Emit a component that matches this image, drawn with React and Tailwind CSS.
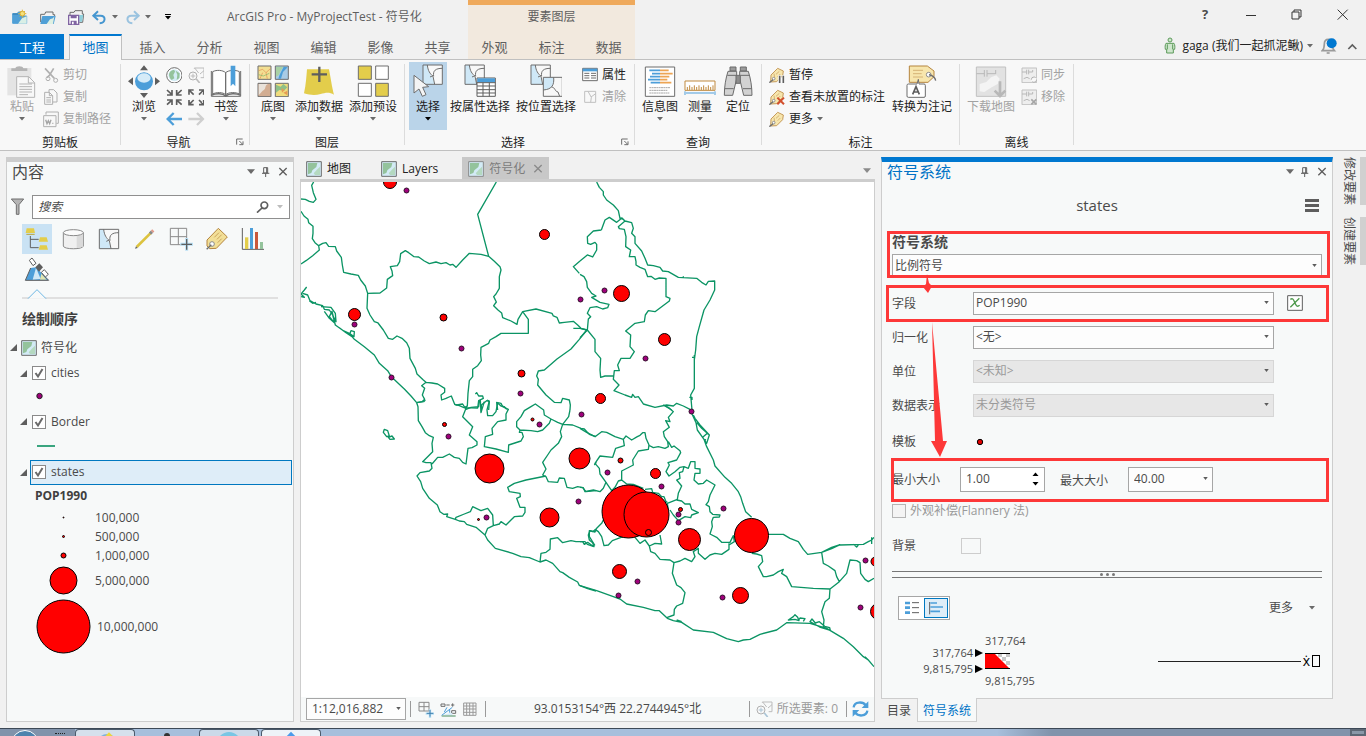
import clsx from 'clsx'

// Icons are drawn on a grid three times finer than the screen.
function Icon({ box, className, children }) {
  const [, , w, h] = box.split(' ').map(Number)
  return (
    <svg
      viewBox={box}
      width={w / 3}
      height={h / 3}
      fill="none"
      strokeWidth="3"
      aria-hidden="true"
      className={clsx('shrink-0', className)}
    >
      {children}
    </svg>
  )
}

function Caret({ className }) {
  return (
    <svg viewBox="0 0 6 4" className={clsx('h-1 w-1.5 shrink-0 fill-[#6a6a6a]', className)} aria-hidden="true">
      <path d="M0 0h6L3 3.5z" />
    </svg>
  )
}

/* ---------- icons ---------- */

const FolderIcon = () => (
  <Icon box="117 27 54 51">
    <path d="M122 66V43h12l3-7h22v8h5v4" stroke="#6d6d6d" />
    <path d="M127 48h40l-6 24h-40z" fill="#4f9fd6" />
    <path d="M140 72l10-14 9-3 4-6-4 23z" fill="#dff0e2" />
  </Icon>
)

const NewProjectIcon = () => (
  <Icon box="33 27 54 51">
    <path d="M38 70V41h14l3-5h12v12h13v22z" fill="#4f9fd6" stroke="#4f9fd6" />
    <path d="M38 42h16" stroke="#2f79ad" />
    <path d="M54 71l12-16 14-6v22z" fill="#d9efe6" />
    <circle cx="67" cy="41" r="7" fill="#f5e27a" stroke="#dcae30" />
    <path d="M67 29v4M67 49v4M55 41h4M75 41h4M59 33l3 3M72 46l3 3M75 33l-3 3M62 46l-3 3" stroke="#e0b63a" />
  </Icon>
)

const SaveIcon = () => (
  <Icon box="201 27 54 54">
    <path d="M210 48V40h12l3-5h22v10h4l-3 25h-10" stroke="#6d6d6d" />
    <path d="M238 48h12l-4 20h-8z" fill="#8fd0dc" />
    <path d="M206 49h30v27h-30z" fill="#fff" stroke="#8064a2" strokeWidth="4" />
    <path d="M212 49h18v9h-18zM212 65h18v11h-18z" fill="#8064a2" />
    <path d="M216 68h5v8h-5z" fill="#fff" />
  </Icon>
)

const UndoIcon = ({ flip }) => (
  <Icon box="276 30 51 48" className={flip && '-scale-x-100 opacity-50'}>
    <path d="M283 50h22c16 0 16 21-3 23" stroke="#4596d0" strokeWidth="6" />
    <path d="M297 37l-14 13 14 13" stroke="#4596d0" strokeWidth="6" />
  </Icon>
)

const PasteIcon = () => (
  <Icon box="20 193 96 99">
    <path d="M24 202h72v82H24z" fill="#e4e4e4" />
    <path d="M36 211h48v-8H72c0-8-24-8-24 0H36z" fill="#b4b4b4" />
    <path d="M52 228h36l18 18v44H52z" fill="#f8f8f8" stroke="#b4b4b4" />
    <path d="M87 228v19h19M60 250h38M60 258h38M60 266h38M60 274h38M60 282h26" stroke="#b4b4b4" />
  </Icon>
)

const CutIcon = () => (
  <Icon box="132 198 48 48">
    <path d="M138 202l28 30M164 202l-12 20-8 8" stroke="#b0b0b0" strokeWidth="5" />
    <circle cx="147" cy="233" r="6" stroke="#b0b0b0" />
    <circle cx="170" cy="238" r="6" stroke="#b0b0b0" />
  </Icon>
)

const CopyIcon = () => (
  <Icon box="132 264 48 48">
    <path d="M150 266h14l10 10v27h-24z" stroke="#b0b0b0" />
    <path d="M137 274h14l10 10v26h-24z" fill="#f8f8f8" stroke="#b0b0b0" />
    <path d="M151 274v10h10M142 290h14M142 297h14M142 303h14" stroke="#b0b0b0" />
  </Icon>
)

const CopyPathIcon = () => (
  <Icon box="132 332 48 51">
    <path d="M141 343v-8h37v34h-6" stroke="#b0b0b0" />
    <path d="M134 346h37v33h-37z" stroke="#b0b0b0" />
    <path d="M140 358l4 12 4-9 4 9 4-12M160 369h3" stroke="#a4a4a4" strokeWidth="4" />
  </Icon>
)

const ExploreIcon = () => (
  <Icon box="384 193 96 99">
    <circle cx="432" cy="242" r="27" fill="#4c9ed9" />
    <ellipse cx="432" cy="232" rx="20" ry="14" fill="#d5ebf8" />
    <path d="M432 194l12 15h-24zM432 292l12-15h-24zM384 242l15-12v24zM480 242l-15-12v24z" fill="#5e5e5e" />
  </Icon>
)

const GlobeIcon = () => (
  <Icon box="497 197 50 50">
    <circle cx="522" cy="222" r="23" fill="#fff" stroke="#6d6d6d" />
    <circle cx="522" cy="222" r="18" fill="#d3ecf5" />
    <path d="M507 215c8-12 17-10 17-4l-5 10 3 10-8 5c-8-7-9-15-7-21zM526 208l12 8-1 14-8 6 2-16z" fill="#94c39c" />
  </Icon>
)

const ZoomSelIcon = ({ tint = '#bcbcbc' }) => (
  <Icon box="563 197 50 50">
    <path d="M582 202v-2h29v29h-10M583 200l12 15M611 208l-12 10" stroke="#bcbcbc" />
    <circle cx="578" cy="224" r="12" fill="#f8f8f8" stroke="#b0b0b0" />
    <path d="M578 217v14M571 224h14" stroke={tint} />
    <path d="M588 233l10 12" stroke={tint} strokeWidth="5" />
  </Icon>
)

const ZoomInIcon = () => (
  <Icon box="497 263 50 50">
    <path
      d="M500 266l14 13M515 266v15h-15M544 266l-14 13M529 266v15h15M500 310l14-13M515 311v-15h-15M544 310l-14-13M529 311v-15h15"
      stroke="#5e5e5e"
      strokeWidth="5"
    />
  </Icon>
)

const ZoomOutIcon = () => (
  <Icon box="563 263 50 50">
    <path
      d="M566 266l14 14M566 280v-14h14M610 266l-14 14M610 280v-14h-14M566 310l14-14M566 296v14h14M610 310l-14-14M610 296v14h-14"
      stroke="#5e5e5e"
      strokeWidth="5"
    />
  </Icon>
)

const BackIcon = ({ flip }) => (
  <Icon box="497 332 50 48" className={flip && '-scale-x-100'}>
    <path d="M502 356h44M520 338l-18 18 18 18" stroke={flip ? '#cfcfcf' : '#4c9ed9'} strokeWidth="7" />
  </Icon>
)

const BookmarkIcon = () => (
  <Icon box="632 193 96 99">
    <path d="M636 211v76h88v-76" stroke="#6d6d6d" />
    <path d="M640 280V213c12-6 30-5 39 3v66c-8-8-28-8-39-2zM679 216c9-8 30-9 41-3v67c-11-6-32-6-41 2z" fill="#fff" stroke="#6d6d6d" />
    <path d="M636 284c14-7 34-6 43 2 10-8 31-9 45-2" stroke="#6d6d6d" strokeWidth="5" />
    <path d="M694 195h14v62l-7-8-7 8z" fill="#4c9ed9" />
  </Icon>
)

const BasemapIcon = () => (
  <Icon box="769 193 98 98">
    <path d="M772 196h39v40h-39z" fill="#f3df92" stroke="#6d6d6d" />
    <path d="M774 210l12-4 10 10 13-12M778 234l8-18M796 216l4 18" stroke="#e08d52" strokeWidth="2" />
    <path d="M774 222l14 4 18-8" stroke="#7db26b" strokeWidth="2" />
    <path d="M824 196h39v40h-39z" fill="#a8cbe6" stroke="#6d6d6d" />
    <path d="M826 198h22l-8 12-6 14-8 4z" fill="#a9d1a4" />
    <path d="M861 200l-14 14-6 20h-8l4-12 12-24z" fill="#4c9ed9" />
    <path d="M772 248h39v40h-39z" fill="#d2ad92" stroke="#6d6d6d" />
    <path d="M774 250h28c-12 5-4 16-16 20l-12 14z" fill="#e9e2da" />
    <path d="M824 248h39v40h-39z" fill="#f0dc7c" stroke="#6d6d6d" />
    <path d="M826 252l14 6 8-8 12 10-10 10-14-2-10 8z" fill="#8ec088" />
    <path d="M842 262l10 6-8 8zM848 276l12-6v14z" fill="#e79a54" />
  </Icon>
)

const AddDataIcon = () => (
  <Icon box="909 193 98 98">
    <path d="M921 206h66c4 20 9 55 15 76-14-9-26-6-40-2-18 5-32 3-50-2 6-25 7-50 9-72z" fill="#e3cd4b" />
    <path d="M958 198v46M935 221h46" stroke="#5e5e5e" strokeWidth="7" />
  </Icon>
)

const PresetIcon = () => (
  <Icon box="1068 193 98 98">
    <path d="M1072 196h39v40h-39zM1124 248h38v39h-38z" fill="#e3cd4b" stroke="#6d6d6d" />
    <path d="M1124 196h38v40h-38zM1072 248h39v39h-39z" fill="#fff" stroke="#6d6d6d" />
  </Icon>
)

// the split parcel that the selection tools share
const Parcel = ({ x, y }) => (
  <g transform={`translate(${x} ${y})`}>
    <path d="M0 0h58v58H0z" fill="#f8f8f8" />
    <path d="M0 0h13c2 18 6 25 14 34l8 24H0z" fill="#cfe8f7" />
    <path d="M0 0h58v58H0zM13 0c2 18 8 26 17 34l5 24M58 10c-20 0-29 7-26 24M30 32l-9 4" stroke="#6d6d6d" />
  </g>
)

const SelectIcon = () => (
  <Icon box="43 193 92 100">
    <Parcel x={73} y={196} />
    <path d="M46 227l44 34-18 2 10 22-11 5-10-22-15 12z" fill="#f4f4f4" stroke="#6d6d6d" />
  </Icon>
)

const SelectByAttrIcon = () => (
  <Icon box="190 193 98 100">
    <Parcel x={193} y={196} />
    <path d="M229 235h55v55h-55z" fill="#fff" stroke="#5e5e5e" />
    <path d="M230 236h53v12h-53z" fill="#4c9ed9" />
    <path d="M229 249h55M229 259h55M229 270h55M229 280h55M247 249v41M266 249v41" stroke="#5e5e5e" />
  </Icon>
)

const SelectByLocIcon = () => (
  <Icon box="388 193 98 100">
    <Parcel x={391} y={196} />
    <path d="M428 233h57v57h-57z" fill="#f8f8f8" />
    <path d="M428 233h31c2 22-4 36-31 38z" fill="#cfe8f7" />
    <path d="M428 233h57v57h-57zM459 233c2 22-4 36-31 38M452 262c14 2 8 12 20 15l5 13" stroke="#6d6d6d" />
  </Icon>
)

const AttributesIcon = () => (
  <Icon box="546 195 48 48">
    <path d="M548 199h44v37h-44z" fill="#fff" stroke="#6d6d6d" />
    <path d="M548 200h44v8h-44z" fill="#4c9ed9" />
    <path d="M553 214h15M553 221h15M553 228h15M573 214h15M573 221h15M573 228h15" stroke="#6d6d6d" />
  </Icon>
)

const ClearIcon = () => (
  <Icon box="546 265 48 48">
    <path d="M554 272h33v33h-33zM564 272l10 18-2 15M587 279l-14 10" stroke="#c0c0c0" />
  </Icon>
)

const InfographicIcon = () => (
  <Icon box="732 193 96 99">
    <path d="M736 199h88v88h-88z" fill="#fff" stroke="#6d6d6d" />
    <path d="M748 209h32M756 219h24M750 228h30M744 237h36M752 246h28" stroke="#4c9ed9" strokeWidth="5" />
    <path d="M780 209h26M780 219h38M780 228h28M780 237h22M780 246h34" stroke="#eda554" strokeWidth="5" />
    <path d="M748 261h62M748 269h54M748 277h60" stroke="#a8a8a8" strokeDasharray="6 1" />
  </Icon>
)

const MeasureIcon = () => (
  <Icon box="850 193 97 99">
    <path d="M853 241h90v28h-90z" fill="#fff" stroke="#c08a3e" />
    <path d="M860 268v-9M867 268v-14M874 268v-9M881 268v-14M888 268v-9M895 268v-14M902 268v-9M909 268v-14M916 268v-9M923 268v-14M930 268v-9M937 268v-14" stroke="#c08a3e" />
    <path d="M853 272v11M943 272v11M856 277h84" stroke="#4c9ed9" />
  </Icon>
)

const LocateIcon = () => (
  <Icon box="970 193 92 99">
    <path d="M991 199h18v12h-18zM1022 199h18v12h-18z" fill="#9b9b9b" stroke="#6a6a6a" />
    <path d="M985 212h26v22l-12 50h-25c0-26 4-50 11-72zM1020 212h26c7 22 11 46 11 72h-25l-12-50z" fill="#d2d2d2" stroke="#6a6a6a" />
    <path d="M983 224h26M1022 224h26M976 264h26M1030 264h26" stroke="#6a6a6a" />
    <path d="M1009 224h13v24h-13z" fill="#8d8d8d" stroke="#6a6a6a" />
  </Icon>
)

const TagIcon = ({ children }) => (
  <Icon box="57 196 48 50">
    <path d="M63 220l20-20 17 8-2 14-18 18-18 1z" fill="#f7e6ad" stroke="#c59a5a" />
    <path d="M78 218l10-9M83 225l8-8M74 228l-2-12" stroke="#c59a5a" strokeWidth="2" />
    <circle cx="71" cy="231" r="4" fill="#fff" stroke="#8d8d8d" />
    <path d="M58 243l11-9" stroke="#6d6d6d" strokeWidth="4" />
    {children}
  </Icon>
)

const ConvertIcon = () => (
  <Icon box="1 193 96 99">
    <path d="M11 196h54l20 15v17l-18 17H11z" fill="#f7e6ad" stroke="#b5853f" />
    <path d="M22 209h30M22 219h26M22 229h30" stroke="#c59a5a" strokeWidth="2" />
    <circle cx="69" cy="222" r="7" fill="#fff" stroke="#8d8d8d" />
    <path d="M70 222c8 2 18 4 20 18" stroke="#6d6d6d" strokeWidth="4" />
    <path d="M8 250h26l4-14 2 14h15q4 0 4 4v32q0 4-4 4H8q-4 0-4-4v-32q0-4 4-4z" fill="#fff" stroke="#6d6d6d" />
    <path d="M21 281l10-23 10 23M25 274h12" stroke="#5e5e5e" strokeWidth="5" />
  </Icon>
)

const DownloadMapIcon = () => (
  <Icon box="676 193 96 99">
    <path d="M680 199h88v88h-88z" fill="#e2e2e2" stroke="#c0c0c0" />
    <path d="M690 250l20-6 14-14 16-6 10 10-6 16-18 10-22 14-14-2z" fill="#f4f4f4" />
    <path d="M680 219h24M704 208v20M712 208v20M712 219h26M738 208v12" stroke="#b8b8b8" />
    <path d="M751 242v42M735 270l16 16 16-16" stroke="#b8b8b8" strokeWidth="8" />
  </Icon>
)

const OfflineIcon = ({ children }) => (
  <Icon box="812 197 50 50">
    <path d="M815 200h44v44h-44z" fill="#eeeeee" stroke="#c0c0c0" />
    <path d="M815 212h14M829 205v14M835 205v14M835 212h12v-6M820 232l10-4 8 4" stroke="#b8b8b8" />
    {children}
  </Icon>
)

const MapThumb = ({ light }) => (
  <Icon box="63 27 48 48">
    <path d="M65 29h44v44H65z" fill="#d3ebf6" stroke={light ? '#8a8a8a' : '#6d6d6d'} />
    <path d="M69 33h28l-3 12-12 10-3 8-10 4z" fill="#94c39c" />
    <path d="M97 52l8-8v25H90l-4-5z" fill="#b4d9c0" />
  </Icon>
)

const PinIcon = () => (
  <Icon box="785 44 28 32">
    <path d="M793 46h12v16h-12zM802 46v16M788 63h22M799 64v12" stroke="#5e5e5e" />
  </Icon>
)

const CrossIcon = ({ color = '#5e5e5e' }) => (
  <Icon box="834 47 30 28">
    <path d="M838 50l22 22M860 50l-22 22" stroke={color} strokeWidth="4" />
  </Icon>
)

/* ---------- title bar and ribbon tabs ---------- */

const TABS = ['插入', '分析', '视图', '编辑', '影像', '共享']

function RibbonTab({ children }) {
  return (
    <button type="button" className="h-full w-[57px] shrink-0 pt-0.5 text-center text-[13px] text-[#5f5f5f]">
      {children}
    </button>
  )
}

function Header() {
  return (
    <header className="flex border-b border-[#c0c0c0]">
      <div className="flex w-[468px] flex-col">
        <div className="flex h-[34px] items-center pl-[11px]">
          <button type="button" aria-label="新建工程"><NewProjectIcon /></button>
          <button type="button" aria-label="打开工程" className="ml-2.5"><FolderIcon /></button>
          <button type="button" aria-label="保存" className="ml-2.5"><SaveIcon /></button>
          <button type="button" aria-label="撤消" className="ml-1.5"><UndoIcon /></button>
          <Caret className="ml-1" />
          <button type="button" aria-label="恢复" className="ml-1.5"><UndoIcon flip /></button>
          <Caret className="ml-1" />
          <button type="button" aria-label="自定义快速访问工具栏" className="ml-3.5 flex flex-col gap-px">
            <span className="h-px w-1.5 bg-black" />
            <Caret className="fill-black" />
          </button>
          <h1 className="ml-14 whitespace-nowrap text-[#5f5f5f]">ArcGIS Pro - MyProjectTest - 符号化</h1>
        </div>
        <nav className="flex h-[25px]">
          <button type="button" className="w-16 bg-[#0078d0] pt-0.5 text-[13px] text-white">工程</button>
          <button
            type="button"
            className="relative ml-[5px] mr-0.5 h-[26px] w-[53px] border-x border-t-2 border-x-[#c0c0c0] border-t-[#0078d0] bg-[#f8f8f8] text-[13px] text-[#0073c6]"
          >
            地图
          </button>
          {TABS.map((tab) => (
            <RibbonTab key={tab}>{tab}</RibbonTab>
          ))}
        </nav>
      </div>
      <div className="flex w-[167px] flex-col border-t-[5px] border-[#efa95b] bg-[#f2e9de]">
        <p className="h-[29px] text-center leading-6 text-[#5f5f5f]">要素图层</p>
        <div className="flex h-[25px] justify-center">
          <RibbonTab>外观</RibbonTab>
          <RibbonTab>标注</RibbonTab>
          <RibbonTab>数据</RibbonTab>
        </div>
      </div>
      <div className="flex flex-1 flex-col items-end">
        <div className="flex h-[30px]">
          <button type="button" aria-label="帮助" className="w-[46px] text-[13px] font-bold text-[#4a4a4a]">?</button>
          <button type="button" aria-label="最小化" className="flex w-[46px] items-center justify-center">
            <span className="h-px w-2.5 bg-[#333]" />
          </button>
          <button type="button" aria-label="还原" className="flex w-[46px] items-center justify-center">
            <Icon box="754 29 34 34">
              <path d="M757 38h21v21h-21zM763 38v-6h21v21h-6" stroke="#333" />
            </Icon>
          </button>
          <button type="button" aria-label="关闭" className="flex w-[46px] items-center justify-center">
            <Icon box="892 29 34 34">
              <path d="M894 31l30 30M924 31l-30 30" stroke="#333" />
            </Icon>
          </button>
        </div>
        <div className="flex h-[29px] items-center pr-2 pt-0.5">
          <Icon box="369 112 36 51">
            <circle cx="387" cy="121" r="6" fill="#cfe6cd" stroke="#5c9a5a" />
            <path d="M375 131h24c3 4 3 12 2 18h-4v11h-20v-11h-4c-1-6-1-14 2-18z" fill="#cfe6cd" stroke="#5c9a5a" />
            <path d="M379 134v15M395 134v15" stroke="#5c9a5a" />
          </Icon>
          <button type="button" className="ml-1.5 flex items-center gap-1 text-[#222]">
            gaga (我们一起抓泥鳅)
            <Caret />
          </button>
          <button type="button" aria-label="通知" className="ml-2">
            <Icon box="843 109 54 54">
              <path d="M847 150c6-6 6-12 6-20s4-14 12-14 12 6 12 14 0 14 6 20z" stroke="#9a9a9a" strokeWidth="5" />
              <path d="M860 157h9" stroke="#9a9a9a" strokeWidth="5" />
              <circle cx="875" cy="128" r="15" fill="#0078d0" />
            </Icon>
          </button>
          <button type="button" aria-label="折叠功能区" className="ml-2">
            <Icon box="925 125 33 24">
              <path d="M929 146l12-12 12 12" stroke="#5e5e5e" strokeWidth="5" />
            </Icon>
          </button>
        </div>
      </div>
    </header>
  )
}

/* ---------- ribbon ---------- */

function Group({ title, width, launcher, children }) {
  return (
    <>
      <section className={clsx('flex flex-col pt-0.5', width)}>
        <div className="flex h-[68px] pl-1">{children}</div>
        <div className="mt-1 flex h-4 leading-[18px]">
          <h2 className="flex-1 text-center">{title}</h2>
          {launcher && (
            <button type="button" aria-label={`${title}选项`} className="w-[13px]">
              <Icon box="707 413 24 24">
                <path d="M709 433v-17h18" stroke="#6d6d6d" />
                <path d="M717 422l10 10M728 423v10h-11" stroke="#6d6d6d" />
              </Icon>
            </button>
          )}
        </div>
      </section>
      <div className="mt-1 h-[81px] w-px bg-[#dcdcdc]" />
    </>
  )
}

function BigButton({ icon, label, width = 'w-[38px]', menu, off, active }) {
  return (
    <button
      type="button"
      disabled={off}
      className={clsx('flex shrink-0 flex-col items-center whitespace-nowrap pt-[3px]', width, active && 'bg-[#bad4e9]', off && 'text-[#a2a2a2]')}
    >
      <span className="flex h-8 items-center">{icon}</span>
      <span className="leading-5">{label}</span>
      {menu && <Caret className={active && 'fill-black'} />}
    </button>
  )
}

function SmallButton({ icon, label, menu, off }) {
  return (
    <button
      type="button"
      disabled={off}
      className={clsx('flex h-[22px] items-center gap-1 whitespace-nowrap px-[3px]', off && 'text-[#a2a2a2]')}
    >
      <span className="flex w-4 justify-center">{icon}</span>
      {label}
      {menu && <Caret />}
    </button>
  )
}

function Ribbon() {
  return (
    <div className="flex border-b border-[#c0c0c0] bg-[#f8f8f8] text-[#222]">
      <Group title="剪贴板" width="w-[120px]">
        <BigButton icon={<PasteIcon />} label="粘贴" width="w-9" menu off />
        <div className="flex flex-col pt-0.5">
          <SmallButton icon={<CutIcon />} label="剪切" off />
          <SmallButton icon={<CopyIcon />} label="复制" off />
          <SmallButton icon={<CopyPathIcon />} label="复制路径" off />
        </div>
      </Group>
      <Group title="导航" width="w-32" launcher>
        <BigButton icon={<ExploreIcon />} label="浏览" menu />
        <div className="grid w-11 grid-cols-2 place-items-center pt-0.5">
          <button type="button" aria-label="全图"><GlobeIcon /></button>
          <button type="button" aria-label="缩放至所选" disabled><ZoomSelIcon /></button>
          <button type="button" aria-label="固定比例放大"><ZoomInIcon /></button>
          <button type="button" aria-label="固定比例缩小"><ZoomOutIcon /></button>
          <button type="button" aria-label="上一范围"><BackIcon /></button>
          <button type="button" aria-label="下一范围" disabled><BackIcon flip /></button>
        </div>
        <BigButton icon={<BookmarkIcon />} label="书签" menu />
      </Group>
      <Group title="图层" width="w-[154px]">
        <BigButton icon={<BasemapIcon />} label="底图" menu />
        <BigButton icon={<AddDataIcon />} label="添加数据" width="w-[54px]" menu />
        <BigButton icon={<PresetIcon />} label="添加预设" width="w-[54px]" menu />
      </Group>
      <Group title="选择" width="w-[229px]" launcher>
        <BigButton icon={<SelectIcon />} label="选择" menu active />
        <BigButton icon={<SelectByAttrIcon />} label="按属性选择" width="w-[66px]" />
        <BigButton icon={<SelectByLocIcon />} label="按位置选择" width="w-[66px]" />
        <div className="flex flex-col pt-0.5">
          <SmallButton icon={<AttributesIcon />} label="属性" />
          <SmallButton icon={<ClearIcon />} label="清除" off />
        </div>
      </Group>
      <Group title="查询" width="w-[126px]">
        <BigButton icon={<InfographicIcon />} label="信息图" width="w-[42px]" menu />
        <BigButton icon={<MeasureIcon />} label="测量" menu />
        <BigButton icon={<LocateIcon />} label="定位" />
      </Group>
      <Group title="标注" width="w-[197px]">
        <div className="flex w-[123px] flex-col items-start pt-0.5">
          <SmallButton
            label="暂停"
            icon={
              <TagIcon>
                <path d="M89 221v24M100 221v24" stroke="#fff" strokeWidth="9" />
                <path d="M89 222v23M100 222v23" stroke="#5e5e5e" strokeWidth="5" />
              </TagIcon>
            }
          />
          <SmallButton
            label="查看未放置的标注"
            icon={
              <TagIcon>
                <path d="M82 222l20 20M102 222l-20 20" stroke="#d2502d" strokeWidth="6" />
              </TagIcon>
            }
          />
          <SmallButton label="更多" icon={<TagIcon />} menu />
        </div>
        <BigButton icon={<ConvertIcon />} label="转换为注记" width="w-[66px]" />
      </Group>
      <Group title="离线" width="w-[113px]">
        <BigButton icon={<DownloadMapIcon />} label="下载地图" width="w-[54px]" off />
        <div className="flex flex-col pt-0.5">
          <SmallButton
            off
            label="同步"
            icon={
              <OfflineIcon>
                <circle cx="851" cy="235" r="8" fill="#f8f8f8" stroke="#b0b0b0" strokeDasharray="18 6" />
              </OfflineIcon>
            }
          />
          <SmallButton
            off
            label="移除"
            icon={
              <OfflineIcon>
                <path d="M843 228l15 15M858 228l-15 15" stroke="#a6a6a6" strokeWidth="5" />
              </OfflineIcon>
            }
          />
        </div>
      </Group>
    </div>
  )
}

/* ---------- contents pane ---------- */

const TOOLS = [
  {
    name: '按绘制顺序列出',
    icon: (
      <Icon box="66 222 90 90">
        <path d="M80 235h22l3 14H77zM120 262h20l4 13h-28zM120 286h20l4 13h-28z" fill="#e3cd4b" />
        <path d="M79 253h25" stroke="#b9a53a" />
        <path d="M91 258v35h25M91 268h25" stroke="#5e5e5e" />
      </Icon>
    ),
  },
  {
    name: '按数据源列出',
    icon: (
      <Icon box="172 222 90 90">
        <path d="M188 248v40c0 11 60 11 60 0v-40" fill="#f0f0f0" stroke="#8a8a8a" />
        <path d="M228 256h19v34l-19 5z" fill="#dadada" />
        <ellipse cx="218" cy="248" rx="30" ry="9" fill="#fbfbfb" stroke="#8a8a8a" />
      </Icon>
    ),
  },
  {
    name: '按选择列出',
    icon: (
      <Icon box="282 222 90 90">
        <Parcel x={298} y={238} />
      </Icon>
    ),
  },
  {
    name: '按编辑列出',
    icon: (
      <Icon box="390 222 90 90">
        <path d="M410 291l44-44" stroke="#dcc33f" strokeWidth="8" />
        <path d="M450 251l6-6" stroke="#8a8a8a" strokeWidth="9" />
        <path d="M456 245l4-4" stroke="#e39a88" strokeWidth="9" />
        <path d="M405 296l3-7 5 5z" fill="#5e5e5e" />
      </Icon>
    ),
  },
  {
    name: '按捕捉列出',
    icon: (
      <Icon box="498 222 90 90">
        <path d="M511 235h49v49h-49zM535 235v49M511 260h49" stroke="#8a8a8a" />
        <path d="M560 264v38M541 283h38" stroke="#b9e0f5" strokeWidth="9" />
        <path d="M560 267v32M544 283h32" stroke="#5e5e5e" strokeWidth="4" />
      </Icon>
    ),
  },
  {
    name: '按标注列出',
    icon: (
      <Icon box="607 222 90 90">
        <path d="M622 270l34-35 27 26-33 34-20 1-8-8z" fill="#f2df97" stroke="#b5853f" />
        <path d="M644 262l14-14M652 268l14-14M654 278l12-12" stroke="#b5853f" strokeWidth="2" />
        <circle cx="637" cy="282" r="7" fill="#fff" stroke="#8a8a8a" />
        <path d="M621 298l14-14" stroke="#6d6d6d" strokeWidth="4" />
      </Icon>
    ),
  },
  {
    name: '按图表列出',
    icon: (
      <Icon box="714 222 90 90">
        <path d="M727 234v64h65" stroke="#5e5e5e" />
        <path d="M735 262h10v35h-10z" fill="#e3cd4b" />
        <path d="M750 234h9v63h-9z" fill="#4c9ed9" />
        <path d="M765 246h9v51h-9z" fill="#c9573b" />
        <path d="M780 276h9v21h-9z" fill="#94c39c" />
      </Icon>
    ),
  },
  {
    name: '按透视成像列出',
    icon: (
      <Icon box="66 315 90 90">
        <path d="M76 391l16-37 16-2 38 39z" fill="#4c9ed9" />
        <path d="M98 389l10-36 14 34z" fill="#cfe8f7" />
        <path d="M120 389l4-18 16 18z" fill="#e3e6b0" />
        <path d="M76 391l16-37M76 391h70l-18-18" stroke="#5e5e5e" />
        <path d="M88 331l8-7 12 16-9 7zM124 367l9-8 12 14-9 8z" fill="#fff" stroke="#5e5e5e" />
        <path d="M106 352l12-12 11 12-12 13z" fill="#5e5e5e" />
      </Icon>
    ),
  },
]

function PaneTitle({ children, className }) {
  return (
    <div className={clsx('flex h-5 items-center', className)}>
      <h2 className="flex-1 text-base leading-5">{children}</h2>
      <button type="button" aria-label="菜单" className="mr-1.5"><Caret className="h-1.5 w-2 fill-[#5e5e5e]" /></button>
      <button type="button" aria-label="自动隐藏" className="mr-2"><PinIcon /></button>
      <button type="button" aria-label="关闭"><CrossIcon /></button>
    </div>
  )
}

function Twisty() {
  return (
    <svg viewBox="0 0 7 7" className="size-[7px] shrink-0 fill-[#5e5e5e]" aria-hidden="true">
      <path d="M7 0v7H0z" />
    </svg>
  )
}

function LayerRow({ name, className, selected }) {
  return (
    <div className={clsx('flex items-center pl-[13px]', className)}>
      <Twisty />
      <label
        className={clsx(
          'ml-[3px] flex h-[25px] flex-1 items-center gap-[5px] border pl-px',
          selected ? 'border-[#0078c0] bg-[#deedf8]' : 'border-transparent',
        )}
      >
        <span className="relative flex size-3.5">
          <input type="checkbox" defaultChecked className="size-3.5 appearance-none border border-[#8a8a8a] bg-white" />
          <svg viewBox="0 0 14 14" className="pointer-events-none absolute inset-0" fill="none" stroke="#6a6a6a" strokeWidth="2" aria-hidden="true">
            <path d="M3.5 7l2.5 3.5L10.5 3" />
          </svg>
        </span>
        {name}
      </label>
    </div>
  )
}

const CLASSES = [
  { label: '100,000', r: 0.5, row: 'h-[19px]' },
  { label: '500,000', r: 1, row: 'h-[19px]' },
  { label: '1,000,000', r: 2.5, row: 'h-[19px]' },
  { label: '5,000,000', r: 13.5, row: 'h-[30px]' },
  { label: '10,000,000', r: 26.5, row: 'h-[62px]' },
]

function ContentsPane() {
  return (
    <aside className="flex w-72 shrink-0 flex-col border border-[#cdcdcd] border-t-[5px] bg-[#f7f9f9]">
      <PaneTitle className="pl-[5px] pr-[5px]">内容</PaneTitle>
      <div className="mt-[13px] flex items-center pl-1 pr-[3px]">
        <Icon box="33 145 40 52">
          <path d="M34 148h37L57 165v29h-8v-29z" fill="#b5b5b5" stroke="#6d6d6d" />
        </Icon>
        <div className="ml-2 flex h-6 flex-1 items-center border border-[#8f8f8f] bg-white pl-[5px] pr-1.5">
          <input
            type="text"
            aria-label="搜索"
            placeholder="搜索"
            className="min-w-0 flex-1 bg-transparent italic outline-none placeholder:text-[#4a4a4a]"
          />
          <button type="button" aria-label="搜索" className="mr-2">
            <Icon box="768 151 38 38">
              <circle cx="793" cy="164" r="10" stroke="#5e5e5e" strokeWidth="5" />
              <path d="M786 172l-15 14" stroke="#5e5e5e" strokeWidth="5" />
            </Icon>
          </button>
          <Caret className="fill-[#bdbdbd]" />
        </div>
      </div>
      <div className="mt-[5px] flex w-[271px] flex-wrap gap-x-1.5 gap-y-px pl-[15px]">
        {TOOLS.map((tool, i) => (
          <button key={tool.name} type="button" aria-label={tool.name} className={clsx('size-[30px]', i === 0 && 'bg-[#c9e2f4]')}>
            {tool.icon}
          </button>
        ))}
      </div>
      <div className="mx-[15px] mt-[3px] flex items-end border-b-2 border-[#e0e0e0]">
        <Icon box="66 412 90 32" className="-mb-0.5">
          <path d="M84 444l27-27 27 27" fill="#f7f9f9" stroke="#6db7e4" />
        </Icon>
      </div>
      <h3 className="mt-2 pl-[15px] text-sm leading-6 font-bold text-[#3f3f3f]">绘制顺序</h3>
      <div className="mt-[5px] flex h-6 items-center gap-1 pl-[3px]">
        <Twisty />
        <MapThumb />
        符号化
      </div>
      <LayerRow name="cities" className="mt-px" />
      <div className="flex h-[22px] items-center pl-7 pb-0.5">
        <svg viewBox="0 0 10 10" className="size-2.5" aria-hidden="true">
          <circle cx="4.5" cy="5" r="2.7" fill="#a0007c" stroke="#222" />
        </svg>
      </div>
      <LayerRow name="Border" className="h-7" />
      <div className="flex h-6 items-center pl-[30px] pb-1">
        <span className="h-0.5 w-[18px] bg-[#3aa57f]" />
      </div>
      <LayerRow name="states" selected className="pr-px" />
      <p className="pl-7 leading-[22px] font-bold text-[#3f3f3f]">POP1990</p>
      <ul className="mt-0.5">
        {CLASSES.map((c) => (
          <li key={c.label} className={clsx('flex items-center pl-7', c.row)}>
            <svg viewBox="-28 -28 56 56" className="-my-7 size-14 shrink-0" aria-hidden="true">
              <circle cx="0.5" cy="-0.5" r={c.r} fill="red" stroke="#000" />
            </svg>
            <span className={c.r > 20 ? 'pl-1.5' : 'pl-1'}>{c.label}</span>
          </li>
        ))}
      </ul>
    </aside>
  )
}

/* ---------- map view ---------- */

// Boundaries come as four sheets, each with its own origin.
const SHEETS = [
  {
    at: 'translate(296 150) scale(.33333)',
    d: 'M53 96L50 101L47 106L52 128L60 148L52 157L40 154L28 148L15 147M15 184L24 198L36 208L38 218L51 229L51 250L49 266L57 278L68 287L80 280L90 278L98 289L118 290L122 303L136 322L139 345L143 367L165 372L187 376L194 390L208 408L215 430L252 429L272 414L274 388L290 377L288 363L283 350L304 347L311 335L314 311L328 302L338 308L354 320L368 321L385 333L400 341L420 336L435 341L450 338L462 345L470 343L480 352L500 330L520 310L555 313L578 319M68 287L70 300L50 317L30 332L15 342M601 96L545 193L578 319L595 334L612 350L615 360L610 380L610 415L600 432L593 440L601 456L593 467L606 480L617 489L620 503L645 513L663 523L666 508L680 485L720 477L768 490L772 498L783 502L790 519L805 517L832 514L845 525L855 535L872 540M680 485L697 508L697 550L615 550L600 560L582 570L578 580L555 592L554 615L556 632L545 647L530 658L530 680L520 692L516 730L514 768L504 773L490 767L476 763L466 738L450 745L437 750L435 735L446 727L446 715L425 702L408 699L390 697M215 430L213 475L222 495L235 515L246 519L262 540L277 565L290 568L303 558L318 565L332 578L340 595L342 625L350 640L358 655L363 672L382 690L390 697L377 707L386 715L379 735L386 748L378 755L362 758M15 440L25 442L15 432L25 420L32 411M20 430L35 435L42 452L60 462L80 467L85 478L100 480L110 495L118 525L140 541L160 550L175 568L205 590L235 615L250 640L275 662L286 680L305 698L325 717L345 738L362 758M75 470L105 472L118 490L120 515L112 500L108 484L100 500L115 518L100 505L85 484M40 452L50 460L60 457M130 533L150 548L168 560M160 555L165 542L175 545L174 560L160 550M872 540L850 568L825 597L783 627L745 660L727 663L722 678L727 688L725 705L750 735L775 757L795 758L800 745L820 750L823 765L822 780M852 333L832 350L850 370M504 773L545 774L548 752L562 745L560 738L548 738L542 728L538 732M556 785L556 765L572 752L580 755L578 780M605 780L602 757L615 768L625 770L632 778',
  },
  {
    at: 'translate(580 150) scale(.33333)',
    d: 'M50 96L58 112L70 125L70 135L80 150L100 165L115 182L120 205L126 204L135 213L155 218L160 235L155 250L165 260L165 280L185 303L195 325L203 345L220 347L240 352L248 363L265 365L295 382L350 385L365 397L378 405L385 394L404 393L404 420L390 450L372 480L358 530L350 560L347 600L343 630L343 680L343 715L332 735L336 780M310 379v6M336 622h10M343 615v18M328 742h8v8M64 240L75 210L88 202L110 217L125 205L135 213L115 230L118 236L133 238L138 260L137 290L152 300L148 320L165 320L168 335L168 345L180 352L195 358L203 380L213 379L225 388L238 384L258 385L258 440L270 445L268 453L245 470L225 485L205 482L196 495L193 515L165 520L137 543L152 555L150 590L163 605L150 625L123 625L113 645L118 662L103 662L100 688L117 705L102 722L135 735L155 742L158 733L165 742L175 740L190 762L225 772L260 765L280 768L290 760L310 768L330 778M64 240L40 243L22 260L23 280L32 283L45 277L50 283L50 300L38 321L22 315L0 333M0 373L12 380L20 395L22 412L35 430L48 438L35 442L60 457L87 463L83 473L68 477L50 470L30 473L22 490L32 500L25 507L22 540M-20 535L0 535L22 540L45 568L45 605L62 625L60 660L62 682L75 678L100 678M22 540L0 563M250 765L275 780',
  },
  {
    at: 'translate(296 400) scale(.33333)',
    d: 'M362 8L383 5L388 0M362 8L366 20L367 62L378 80L388 98L400 107L412 112L408 130L410 155L395 170L380 185L390 188L405 188L408 205L400 213L372 218L363 228L374 245L380 265L400 295L424 315L432 335L443 343L455 342L452 350L478 358L490 363L505 365L512 373L540 382L567 405L575 420L598 445L650 460L675 470L700 473L732 486L750 480L770 490L792 515L800 518L820 532L845 546L850 556L875 566L900 573M408 192L425 172L440 172L460 162L475 172L490 175L500 187L510 192L516 145L528 143L543 135L543 125L520 105L530 80L500 50L510 25L513 18M476 13L482 15L500 12L510 28L525 22L548 20L550 0M553 0L555 38L565 5M573 0L580 3L573 30L575 47L590 47L600 35L605 8L615 10L620 20L637 28L630 42L630 60L605 65L588 85L590 103L568 110L565 140L600 147L637 157L638 135L675 123L682 110L678 97L670 97L672 90L705 92L725 95L740 90L760 70L765 57L745 45L743 30L718 12L705 20L685 32L675 50L662 65L662 80L672 90M765 57L785 67L800 73L830 75L855 85L865 87L880 103L900 110M800 73L818 50L822 30M800 73L793 95L797 110L787 130L765 150L755 165L740 187L750 207L740 225L750 230L757 245L785 247L790 234L805 235L813 262L830 265L845 260L860 263L870 275L900 272M750 228L690 240L655 250L635 262L640 275L672 280L673 290L662 295L672 322L687 322L687 337L680 348L655 350L645 360L630 375L615 365L610 372L592 377L590 345L575 325L555 332L530 320L523 335L505 342L480 352L478 358M592 377L575 385L567 405M732 486L735 460L750 457L762 448L763 417L785 413L800 428L825 422L840 425L860 425L865 433L875 427L890 438L896 435L880 410L880 392L890 395L900 387M265 88L262 97L272 110L280 108L275 92zM277 112L282 118L295 117L288 108zM895 195l6-8',
  },
  {
    at: 'translate(580 400) scale(.33333)',
    d: 'M0 85L20 97L45 110L65 95L80 97L105 110L130 118L133 137L107 145L98 172L60 168L45 190L58 205L60 222L78 247L70 265L60 275L40 270L15 275L10 263L0 262M78 247L95 272L105 262L115 243L125 240L125 213L160 195L158 180L175 153L205 148L207 135L198 115L195 98L188 98L180 106L172 110L155 120L138 108L130 118M205 135L220 143L235 140L255 145L265 140L263 125L253 110L250 95L268 82L257 62L270 65L265 52L280 35L265 22L250 15M333 35L348 68L352 90L372 118L378 120M340 45L345 55L360 75L388 105L380 130L368 112L382 100L365 85L350 68M372 118L380 140L400 180L405 198L435 232L455 250L475 275L482 290L488 310L497 335L515 352M265 125L275 142L282 138L300 152L302 158L290 180L264 188L268 195L258 215L267 228L285 215L300 202L312 200L325 205L332 185L345 185L345 205L360 207L360 220L345 220L342 240L355 252L370 250L380 240L405 255L390 285L385 305L378 314L388 320L390 335L398 343L420 345L418 351L400 352L395 365L397 380L390 402L410 412L425 427L450 427L460 407L463 425L447 435M312 200L308 215L298 218L300 235L290 240L305 258L295 280L292 298L262 310L265 330M290 300L305 303L315 312L330 312L335 328L355 338L335 345L332 353L315 350L295 362L280 345L270 330M125 240L140 252L160 253L190 265M195 268L215 266L218 277L235 280L245 290L252 290L258 305M250 310L262 305M0 425L15 425L22 433L42 440L38 428L28 420L25 405L30 392L45 396L50 385L65 370L70 360M45 388L55 395L65 410L72 437L85 435L97 422L115 415L130 410M165 412L180 430L195 420L208 438L225 430L245 432L240 405M208 438L212 455L225 460L240 478L270 480L282 488L300 483L315 475L335 485L345 470L340 455L355 445L355 460L375 478L390 465L405 460L425 463L447 448L447 430M282 488L277 520L290 555L303 563L315 578L308 610L290 618L283 628L282 645L262 652M0 557L50 572L100 590L120 597L140 612L190 622L225 632L238 632L262 655L280 662L305 667L340 690L400 697L440 716L475 725L490 720L510 718L540 703L590 690L620 668L690 670L740 685L790 715L820 740L850 770L865 780L882 800M515 460L530 462L545 467L548 485L535 500L550 530L560 530L580 525L595 515L610 508L605 520L620 530L635 560L700 565L750 567L778 545L800 520L810 480L830 482L840 488L842 520L855 538L865 545L882 535M725 457L730 490L745 498L765 512L770 530L778 545M750 567L748 595L735 605L730 620L725 635L732 660L730 680M565 403L610 403L630 415L655 425L670 448L683 463L725 457L750 447L780 435L850 433L865 425L875 420L882 412M725 457l30-15 25-8-25 12zM820 433l10 8 5-6M875 412v20M625 660l15-10 5-6 8 8 4 10-12-4zM655 662l5-8 15 2-5 8M690 665l6-8 10 12 12-4 16 14 15 4 2 8-12-4-20-6zM290 660l15 5M855 770l12 12',
  },
]

const STATES = [
  [390, 182, 6.5], [544.5, 234.5, 5], [621.5, 293.5, 8], [354.5, 314.5, 6], [443.5, 317.5, 3.5], [664.5, 339.5, 6],
  [521.5, 373.5, 3.5], [600.5, 398.5, 5], [489.5, 468.5, 14.5], [579.5, 458.5, 10.5], [549.5, 517.5, 9.5],
  [444.5, 424.5, 2], [532.5, 419.5, 1.5], [478.5, 519.5, 1], [620.5, 460.5, 2.5], [655.5, 473.5, 5],
  [628.5, 511.5, 26.5], [646.5, 514.5, 22.5], [648.5, 532.5, 3], [680.5, 509.5, 2], [689.5, 539.5, 11],
  [619.5, 571.5, 7], [740.5, 595.5, 8], [751.5, 535.5, 17], [875.5, 561.5, 4.5], [878.5, 611.5, 8],
]

const CITIES = [
  [406.5, 190.5], [580.5, 299.5], [604.5, 290.5], [645.5, 358.5], [354.5, 324.5], [461.5, 348.5], [391.5, 377.5],
  [520.5, 393.5], [581.5, 414.5], [691.5, 411.5], [448.5, 436.5], [539.5, 424.5], [607.5, 472.5], [486.5, 517.5],
  [578.5, 501.5], [661.5, 486.5], [723.5, 508.5], [678.5, 514.5], [678.5, 522.5], [637.5, 581.5], [618.5, 595.5],
  [722.5, 597.5], [865.5, 560.5], [860.5, 607.5],
]

function ViewTab({ label, active, className }) {
  return (
    <button
      type="button"
      className={clsx('flex h-[22px] items-center gap-[5px] px-1.5 pt-0.5', active ? 'bg-[#c8c8c8] text-[#7c7c7c]' : 'text-[#222]', className)}
    >
      <MapThumb light={active} />
      {label}
      {active && <span className="ml-[3px]"><CrossIcon color="#8a8a8a" /></span>}
    </button>
  )
}

const Bar = ({ className }) => <span className={clsx('h-4 w-px bg-[#9a9a9a]', className)} />

function MapView() {
  return (
    <main className="flex min-w-0 flex-1 flex-col">
      <div className="flex items-center">
        <ViewTab label="地图" />
        <ViewTab label="Layers" className="ml-[18px]" />
        <ViewTab label="符号化" active className="ml-[18px]" />
        <Caret className="ml-auto mr-1 mt-1.5 h-1.5 w-2 fill-[#8a8a8a]" />
      </div>
      <div className="flex min-h-0 flex-1 flex-col border border-[#cdcdcd] border-t-[3px] bg-white">
        <svg viewBox="301 182 573 515" preserveAspectRatio="xMidYMid slice" className="min-h-0 w-full flex-1" role="img" aria-label="地图">
          {SHEETS.map((s) => (
            <path key={s.at} transform={s.at} d={s.d} fill="none" stroke="#0b9464" strokeWidth="4" strokeLinejoin="round" />
          ))}
          {STATES.map(([x, y, r]) => (
            <circle key={`${x}-${y}`} cx={x} cy={y} r={r} fill="red" stroke="#000" />
          ))}
          {CITIES.map(([x, y]) => (
            <circle key={`${x}-${y}`} cx={x} cy={y} r="2.5" fill="#a0007c" stroke="#30102a" />
          ))}
        </svg>
        <div className="flex h-6 shrink-0 items-center bg-[#f7f9f9] pl-[5px] pr-[5px]">
          <Select label="比例" value="1:12,016,882" className="h-[22px] w-[100px]" />
          <Bar className="ml-1" />
          <button type="button" aria-label="捕捉" className="ml-[7px]">
            <Icon box="365 901 48 51">
              <path d="M368 905h30v26h-30zM383 905v26M368 918h30" stroke="#8a8a8a" />
              <path d="M401 926v26M388 939h25" stroke="#b9e0f5" strokeWidth="7" />
              <path d="M401 928v20M391 938h20" stroke="#3f7fae" />
            </Icon>
          </button>
          <button type="button" aria-label="约束" className="ml-1.5">
            <Icon box="431 901 51 51">
              <path d="M434 910h12v7h-12zM466 930h12v8h-12z" stroke="#6d6d6d" />
              <path d="M450 913h10M469 908v10M464 913h10" stroke="#6d6d6d" />
              <path d="M440 942l28-6v11l10-1" fill="#d5ebf8" />
              <path d="M436 946h42" stroke="#74a884" strokeWidth="4" />
              <path d="M436 944l32-24M452 920l-8 14M460 926v10" stroke="#4c9ed9" />
            </Icon>
          </button>
          <button type="button" aria-label="格网" className="ml-1.5">
            <Icon box="500 903 42 42">
              <path d="M502 906h37v37h-37zM511 906v37M520 906v37M530 906v37M502 915h37M502 924h37M502 934h37" stroke="#9a9a9a" />
            </Icon>
          </button>
          <Bar className="ml-2" />
          <p className="flex-1 whitespace-nowrap text-center text-[#4a4a4a]">93.0153154°西 22.2744945°北</p>
          <Bar />
          <button type="button" disabled className="ml-1.5 flex items-center gap-1 whitespace-nowrap text-[#9a9a9a]">
            <ZoomSelIcon tint="#a9c4d6" />
            所选要素: 0
          </button>
          <Bar className="ml-2" />
          <button type="button" aria-label="刷新" className="ml-[5px]">
            <Icon box="817 900 51 54">
              <path d="M822 922c2-18 28-18 36-6M863 932c-2 18-28 18-36 6" stroke="#4c9ed9" strokeWidth="7" />
              <path d="M866 904v20h-20zM819 950v-20h20z" fill="#4c9ed9" />
            </Icon>
          </button>
        </div>
      </div>
    </main>
  )
}

/* ---------- symbology pane ---------- */

function Select({ id, label, value, disabled, tight, className }) {
  return (
    <div className={clsx('relative', className)}>
      <select
        id={id}
        aria-label={label}
        disabled={disabled}
        className={clsx(
          'block size-full appearance-none rounded-none border',
          tight ? 'pl-0.5' : 'pl-[5px]',
          disabled ? 'border-[#d6d6d6] bg-[#e7e7e7] text-[#9a9a9a] opacity-100' : 'border-[#a6a6a6] bg-[#fdfdfd] text-[#4a4a4a]',
        )}
      >
        <option>{value}</option>
      </select>
      <svg viewBox="0 0 6 4" className="pointer-events-none absolute right-[5px] top-1/2 -mt-0.5 h-[3px] w-[5px] fill-[#5c5c5c]" aria-hidden="true">
        <path d="M0 0h6L3 4z" />
      </svg>
    </div>
  )
}

const FIELDS = [
  { id: 'field', label: '字段', value: 'POP1990' },
  { id: 'norm', label: '归一化', value: '<无>' },
  { id: 'unit', label: '单位', value: '<未知>', disabled: true },
  { id: 'repr', label: '数据表示', value: '未分类符号', disabled: true },
]

function Markup() {
  return (
    <svg
      viewBox="881 157 452 543"
      preserveAspectRatio="xMinYMin meet"
      className="pointer-events-none absolute -left-px -top-[5px] h-[543px] w-[452px]"
      fill="none"
      stroke="#fd3838"
      strokeWidth="3"
      aria-hidden="true"
    >
      <path d="M888.5 232.5h440v44h-440zM887.5 286.5h440v34h-440zM892.5 459.5h435v41h-435z" />
      <g fill="#fd3838" stroke="none">
        <path d="M927 274l2 9 3 3-4 7-5-6 3-3z" />
        <path d="M932 322l11 119h4l-7 16-9-16h4z" />
      </g>
    </svg>
  )
}

function Histogram() {
  return (
    <div className="mt-[13px] flex items-center pl-3.5 text-[11px] leading-4">
      <div className="flex w-[67px] flex-col items-end">
        <span>317,764</span>
        <span>9,815,795</span>
      </div>
      <svg viewBox="0 0 8 24" className="ml-0.5 h-6 w-2" aria-hidden="true">
        <path d="M0 0l8 4-8 4zM0 16l8 4-8 4z" />
      </svg>
      <div className="ml-0.5 flex flex-col">
        <span className="mb-1">317,764</span>
        <svg viewBox="0 0 25 16" className="h-4 w-[25px]" aria-hidden="true">
          <path d="M0 0h25v16H0z" fill="#fff" />
          <path d="M13 0h4v4h4V0h4v4h-4v4h4v4h-4V8h-4V4h-4z" fill="#c8c8c8" />
          <path d="M0 0h9l16 16H0z" fill="red" />
          <path d="M0 .5h25M0 15.5h25" stroke="#000" />
        </svg>
        <span className="mt-1">9,815,795</span>
      </div>
      <span className="ml-auto h-px w-[143px] bg-[#222]" />
      <span className="ml-0.5 text-sm leading-4 text-black">ẋ</span>
      <span className="ml-0.5 mr-0.5 h-3 w-2 border border-black" />
    </div>
  )
}

function SymbologyPane() {
  return (
    <aside className="flex w-[452px] shrink-0 flex-col">
      <div className="relative flex flex-1 flex-col border border-t-[5px] border-[#cdcdcd] border-t-[#0078d0] bg-[#f7f9f9]">
        <PaneTitle className="pl-[5px] pr-[5px] text-[#0073c6]">符号系统</PaneTitle>
        <div className="px-2.5">
          <div className="relative flex h-[46px] items-center justify-center">
            <h3 className="pr-5 text-[15px]">states</h3>
            <button type="button" aria-label="选项" className="absolute right-[3px] flex w-3.5 flex-col gap-0.5">
              <span className="h-[3px] bg-[#5e5e5e]" />
              <span className="h-[3px] bg-[#5e5e5e]" />
              <span className="h-[3px] bg-[#5e5e5e]" />
            </button>
          </div>
          <label htmlFor="symbology" className="block h-[26px] text-sm leading-7 font-bold">符号系统</label>
          <Select id="symbology" value="比例符号" tight className="h-[23px]" />
          <div className="mt-[9px]">
            {FIELDS.map((f) => (
              <div key={f.id} className="grid h-[34px] grid-cols-[81px_1fr_48px] items-center">
                <label htmlFor={f.id} className="pt-0.5">{f.label}</label>
                <Select id={f.id} value={f.value} disabled={f.disabled} tight className="h-[23px]" />
                {f.id === 'field' && (
                  <button type="button" aria-label="设置表达式" className="ml-[13px] size-4">
                    <Icon box="1233 435 48 48">
                      <path d="M1235 437h44v44h-44z" fill="#fff" stroke="#5e5e5e" />
                      <path d="M1243 448c6-4 9-2 13 9s8 15 15 9M1270 445l-27 27" stroke="#4f9a4d" strokeWidth="4" />
                    </Icon>
                  </button>
                )}
              </div>
            ))}
          </div>
          <div className="flex h-[38px] items-center pt-0.5">
            <span className="w-[81px]">模板</span>
            <button type="button" aria-label="模板" className="ml-0.5">
              <svg viewBox="0 0 10 10" className="size-2.5" aria-hidden="true">
                <circle cx="5" cy="5" r="2.7" fill="#e00000" stroke="#000" />
              </svg>
            </button>
          </div>
          <div className="flex h-[38px] items-center">
            <label htmlFor="min" className="w-[68px] pt-0.5">最小大小</label>
            <div className="flex h-[25px] w-[85px] items-center border border-[#a6a6a6] bg-white px-[5px]">
              <input id="min" type="text" defaultValue="1.00" className="w-0 flex-1 bg-transparent outline-none" />
              <span className="flex flex-col gap-1.5">
                <button type="button" aria-label="增大"><Caret className="h-1 w-[7px] rotate-180 fill-black" /></button>
                <button type="button" aria-label="减小"><Caret className="h-1 w-[7px] fill-black" /></button>
              </span>
            </div>
            <label htmlFor="max" className="ml-[15px] w-[68px] pt-1">最大大小</label>
            <Select id="max" value="40.00" className="h-[25px] w-[85px]" />
          </div>
          <label className="flex h-[26px] items-center gap-1 text-[#9a9a9a]">
            <input type="checkbox" disabled className="size-3.5 appearance-none border border-[#b5b5b5] bg-[#f4f4f4]" />
            外观补偿(Flannery 法)
          </label>
          <div className="flex h-[42px] items-center pt-0.5">
            <span className="w-[69px]">背景</span>
            <button type="button" aria-label="背景" className="h-4 w-5 border border-[#cdcdcd]" />
          </div>
          <div className="mt-[5px] flex h-[7px] items-center justify-center gap-[3px] border-y border-[#777]">
            <span className="size-[3px] rounded-full bg-[#777]" />
            <span className="size-[3px] rounded-full bg-[#777]" />
            <span className="size-[3px] rounded-full bg-[#777]" />
          </div>
          <div className="mt-[18px] flex items-center pl-1.5">
            <div className="flex h-6 w-[52px] border border-[#a6a6a6] bg-white p-px">
              <button type="button" aria-label="类" className="flex flex-1 items-center justify-center">
                <Icon box="84 510 48 48">
                  <path d="M87 519h15M87 533h15M87 548h15" stroke="#4c9ed9" strokeWidth="8" />
                  <path d="M108 518h21M108 533h21M108 548h21" stroke="#5e5e5e" />
                </Icon>
              </button>
              <button type="button" aria-label="直方图" className="flex w-6 items-center justify-center border border-[#0078c0] bg-[#deedf8]">
                <Icon box="156 510 48 48">
                  <path d="M161 516v37" stroke="#5e5e5e" />
                  <path d="M163 519h20M163 531h38M163 544h29" stroke="#4c9ed9" strokeWidth="5" />
                </Icon>
              </button>
            </div>
            <button type="button" className="ml-auto flex items-center gap-4 pr-[7px]">
              更多
              <Caret />
            </button>
          </div>
          <Histogram />
        </div>
        <Markup />
      </div>
      <div className="flex h-[23px]">
        <button type="button" className="w-9">目录</button>
        <button type="button" className="relative -mt-px w-[60px] border border-t-0 border-[#cdcdcd] bg-[#f7f9f9] pt-0.5 text-[#0073c6]">
          符号系统
        </button>
      </div>
    </aside>
  )
}

function SideTab({ children }) {
  return (
    <button type="button" className="flex h-12 w-full justify-end">
      <span className="mr-1 w-3.5 leading-[14px] whitespace-nowrap [text-orientation:sideways] [writing-mode:vertical-rl]">{children}</span>
      <span className="h-full w-1.5 bg-[#d0d0d0]" />
    </button>
  )
}

function Taskbar() {
  return (
    <footer className="flex h-2 shrink-0 overflow-hidden border-t border-[#3c4856] bg-linear-to-r from-[#a7bfdc] from-73% to-[#8193ab] to-77%">
      <div className="flex w-[75px] justify-center gap-4 bg-[#8193ab]">
        <span className="mt-px h-7 w-7 shrink-0 rounded-full border border-white bg-[#4d83ad]" />
        <span className="mt-1 w-2.5 border-t border-dotted border-[#222]" />
      </div>
      <div className="flex w-[60px] justify-center rounded-t-sm border border-b-0 border-[#4b5a6b] bg-[#d5e0ec]">
        <span className="mt-1 size-5 rounded-full bg-[#7fb0dd]" />
        <span className="-ml-3 mt-1 size-2 rotate-45 bg-[#ecd63f]" />
      </div>
      <div className="flex w-16 justify-center">
        <span className="mt-1 size-1.5 rounded-full bg-[#333]" />
      </div>
      <div className="flex w-[60px] justify-center rounded-t-sm border border-b-0 border-[#4b5a6b] bg-[#cbdae9]">
        <span className="mt-0.5 size-6 rounded-full bg-[#7ac6e4]" />
      </div>
      <div className="ml-0.5 flex w-[60px] justify-center rounded-t-sm border border-b-0 border-[#4b5a6b] bg-[#eef3f8]">
        <span className="mt-1.5 size-5 rotate-45 bg-[#4b9bea]" />
      </div>
      <div className="ml-auto w-4 border-2 border-[#5d6875] bg-[#8a98a8]" />
    </footer>
  )
}

export default function App() {
  return (
    <div className="flex h-screen flex-col overflow-hidden bg-[#f1f1f1] text-xs text-[#4a4a4a] [font-family:'Open_Sans','Noto_Sans_CJK_SC',sans-serif]">
      <Header />
      <Ribbon />
      <div className="flex min-h-0 flex-1 pt-1.5 pb-1.5 pl-1.5">
        <ContentsPane />
        <div className="w-1.5 shrink-0" />
        <MapView />
        <div className="w-1.5 shrink-0" />
        <SymbologyPane />
        <nav className="flex w-[33px] shrink-0 flex-col gap-3">
          <SideTab>修改要素</SideTab>
          <SideTab>创建要素</SideTab>
        </nav>
      </div>
      <Taskbar />
    </div>
  )
}
